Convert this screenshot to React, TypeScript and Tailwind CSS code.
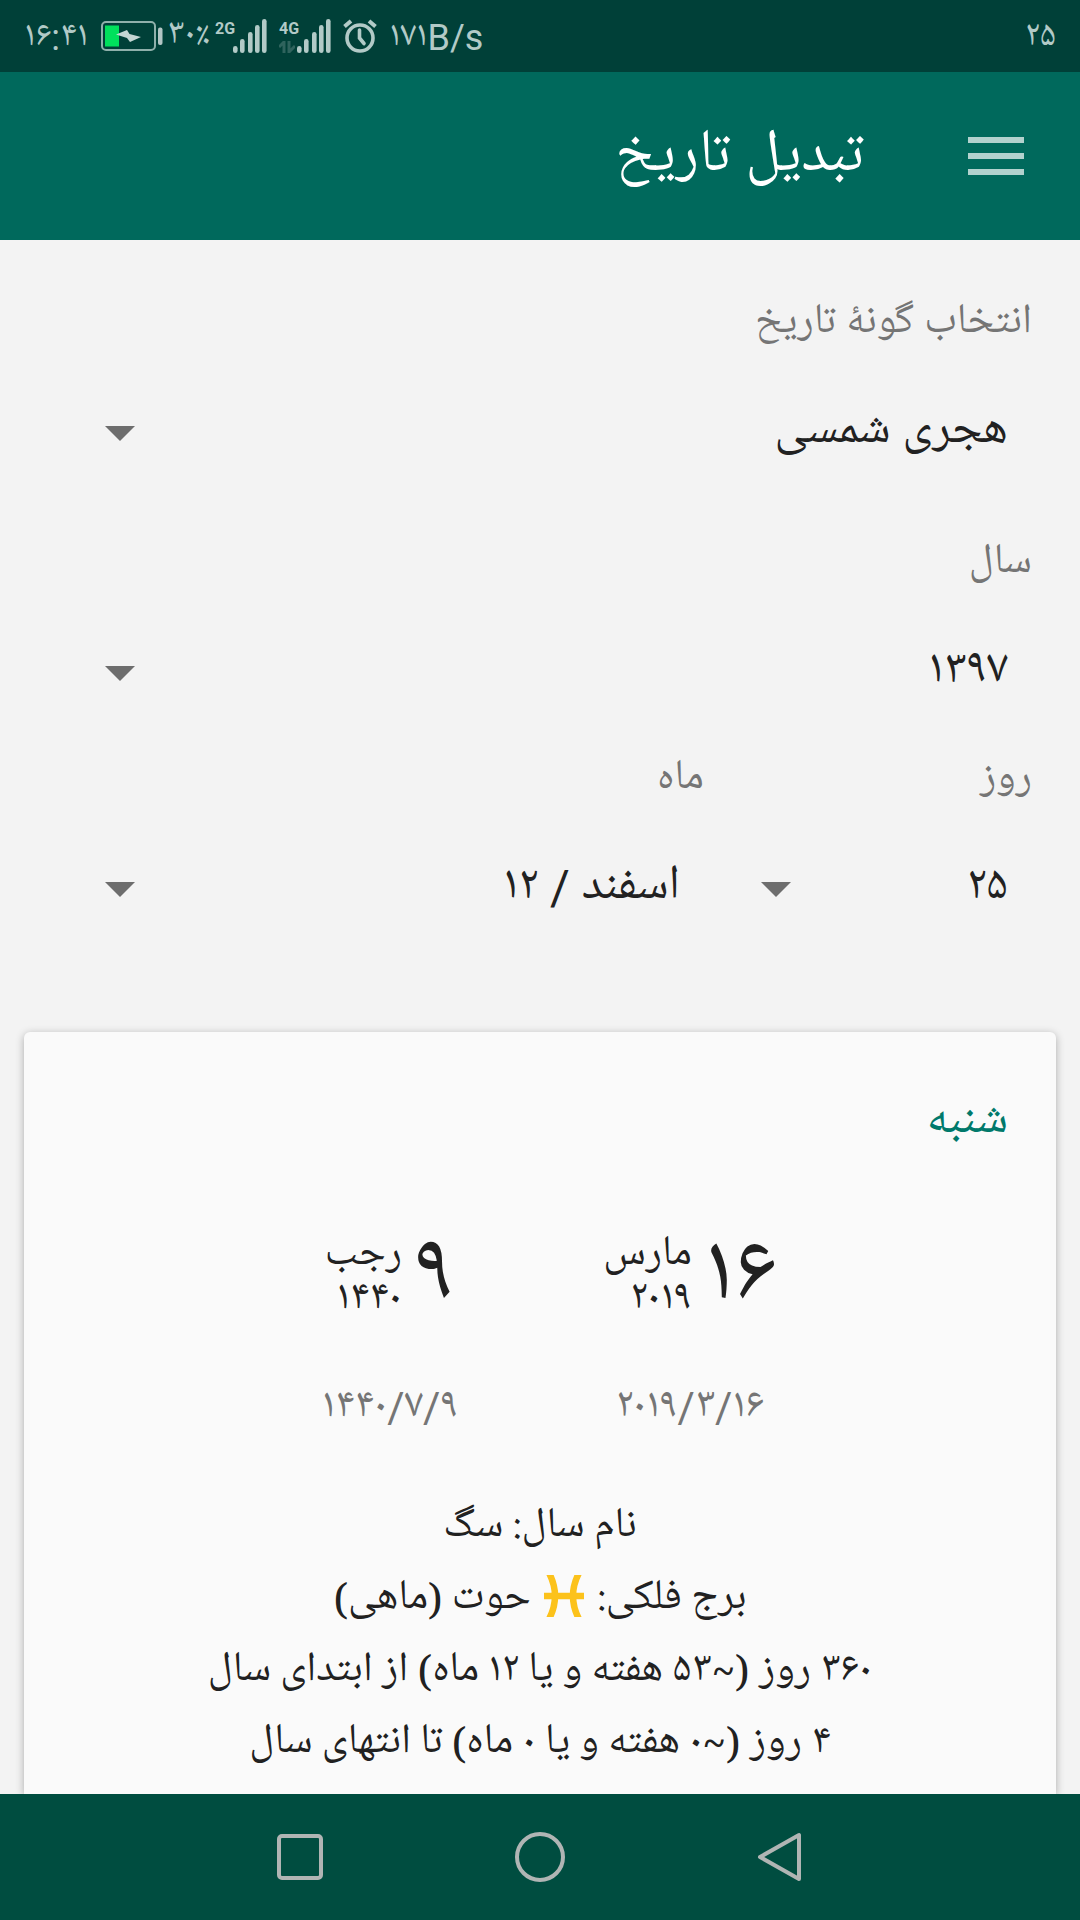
import { FC, ReactNode, useState } from "react"

const SIGNAL_BARS = [
  { x: 0, top: 27 },
  { x: 7, top: 20 },
  { x: 15, top: 13 },
  { x: 22, top: 6 },
  { x: 29, top: 0 }
]

const SignalBars: FC = () => (
  <svg width="34" height="34" viewBox="0 0 34 34" fill="currentColor" aria-hidden="true">
    {SIGNAL_BARS.map(bar => (
      <rect
        key={bar.x}
        x={bar.x}
        y={bar.top}
        width="4.600"
        height={34 - bar.top}
        rx="2.300"
      />
    ))}
  </svg>
)

const BatteryIcon: FC = () => (
  <svg width="62" height="30" viewBox="0 0 62 30" fill="none" aria-hidden="true">
    <rect x="1" y="1" width="53" height="28" rx="4" stroke="#8fb0ab" strokeWidth="2" />
    <rect x="4" y="4.500" width="14" height="21" fill="#00e05c" />
    <path d="M15 13.500 26 9l2.500 4L40 16l-11 5-3-4z" fill="#c4d6d3" />
    <rect x="57" y="6.500" width="4.500" height="17.500" rx="2" fill="#b2c5c4" />
  </svg>
)

const AlarmIcon: FC = () => (
  <svg
    width="34"
    height="34"
    viewBox="0 0 34 34"
    fill="none"
    stroke="currentColor"
    aria-hidden="true"
  >
    <circle cx="17" cy="19" r="13" strokeWidth="3.600" />
    <path d="M16.500 11v8l4.500 5.500" strokeWidth="3.600" strokeLinecap="round" />
    <path d="M1.500 7.500 8 2M32.500 7.500 26 2" strokeWidth="4" />
  </svg>
)

const DataArrowsIcon: FC = () => (
  <svg width="16" height="12" viewBox="0 0 16 12" fill="none" stroke="#2f635d" strokeWidth="3" aria-hidden="true">
    <path d="M5 12V1L0 6M10 0v11l6-6" />
  </svg>
)

const PiscesIcon: FC = () => (
  <svg
    className="mx-1 mt-2 inline-block align-middle"
    width="40"
    height="42"
    viewBox="0 0 40 42"
    fill="none"
    stroke="#fcc21b"
    strokeWidth="6.500"
    aria-label="حوت"
  >
    <path d="M4-4q14 25 0 50M36-4q-14 25 0 50M0 21h40" />
  </svg>
)

interface NetworkProps {
  label: string
  active?: boolean
}

const Network: FC<NetworkProps> = ({ label, active }) => (
  <div className="flex items-end">
    <div className="flex h-8 w-[18px] flex-col justify-between">
      <span className="text-base leading-4 font-bold">{label}</span>
      {active && <DataArrowsIcon />}
    </div>
    <SignalBars />
  </div>
)

const StatusBar: FC = () => (
  <div
    dir="ltr"
    className="flex h-[72px] shrink-0 items-center bg-[#004038] px-6 text-4xl text-[#b2cac7]"
  >
    <span className="w-[77px] pt-1">۱۶:۴۱</span>
    <BatteryIcon />
    <span className="ml-1 w-12">۳۰٪</span>
    <Network label="2G" />
    <div className="ml-3">
      <Network label="4G" active />
    </div>
    <div className="ml-3">
      <AlarmIcon />
    </div>
    <span className="ml-3 pt-1">۱۷۱B/s</span>
    <span className="ml-auto pt-1">۲۵</span>
  </div>
)

interface SpinnerProps {
  id: string
  label: string
  options: string[]
}

const Spinner: FC<SpinnerProps> = ({ id, label, options }) => {
  const [value, setValue] = useState(options[0])

  return (
    <div className="flex flex-col">
      <label htmlFor={id} className="text-[42px] leading-[72px] text-[#757575]">
        {label}
      </label>
      <div className="relative mt-6 h-24">
        <select
          id={id}
          value={value}
          onChange={e => setValue(e.target.value)}
          className="h-full w-full appearance-none bg-transparent pr-6 text-5xl leading-[96px] text-[#212121] outline-none"
        >
          {options.map(option => (
            <option key={option}>{option}</option>
          ))}
        </select>
        <svg
          className="pointer-events-none absolute top-[42px] left-[57px]"
          width="30"
          height="15"
          viewBox="0 0 30 15"
          fill="#6d6d6d"
          aria-hidden="true"
        >
          <path d="M0 0h30L15 15z" />
        </svg>
      </div>
    </div>
  )
}

interface ConvertedDateProps {
  day: string
  month: string
  year: string
  linear: string
}

const ConvertedDate: FC<ConvertedDateProps> = ({ day, month, year, linear }) => (
  <div className="flex w-75 flex-col items-center text-[42px]">
    <div className="flex h-24 items-center gap-3">
      <span className="text-8xl leading-[96px]">{day}</span>
      <div className="flex flex-col leading-[44px]">
        <span>{month}</span>
        <span>{year}</span>
      </div>
    </div>
    <span className="mt-[46px] leading-[72px] text-[#757575]">{linear}</span>
  </div>
)

const NavButton: FC<{ label: string; children: ReactNode }> = ({ label, children }) => (
  <button type="button" aria-label={label} className="flex h-full w-60 items-center justify-center">
    <svg width="50" height="50" viewBox="0 0 50 50" fill="none" stroke="#b0b5b4" strokeWidth="4" strokeLinejoin="round">
      {children}
    </svg>
  </button>
)

export default function App() {
  return (
    <div
      dir="rtl"
      lang="fa"
      className="flex h-screen flex-col overflow-hidden bg-[#f3f3f3] font-['Roboto','Noto_Naskh_Arabic_UI','Noto_Naskh_Arabic','DejaVu_Sans',sans-serif] text-[#212121]"
    >
      <StatusBar />

      <header className="flex h-[168px] shrink-0 items-center bg-[#00695c] px-14">
        <button type="button" aria-label="منو" className="flex w-14 flex-col gap-[10px]">
          <span className="h-[6px] bg-[#b2d2ce]" />
          <span className="h-[6px] bg-[#b2d2ce]" />
          <span className="h-[6px] bg-[#b2d2ce]" />
        </button>
        <h1 className="mr-26 pt-1 text-6xl text-white">تبدیل تاریخ</h1>
      </header>

      <main className="flex min-h-0 flex-1 flex-col overflow-hidden">
        <form className="flex flex-col gap-12 px-12 pt-12">
          <Spinner id="calendar" label="انتخاب گونهٔ تاریخ" options={["هجری شمسی", "هجری قمری", "میلادی"]} />
          <div className="flex flex-col gap-6">
            <Spinner id="year" label="سال" options={["۱۳۹۷", "۱۳۹۸"]} />
            <div className="grid grid-cols-[1fr_2fr]">
              <Spinner id="day" label="روز" options={["۲۵", "۲۶"]} />
              <Spinner id="month" label="ماه" options={["اسفند / ۱۲", "بهمن / ۱۱"]} />
            </div>
          </div>
        </form>

        <section className="mx-6 mt-24 flex-1 rounded-t-md bg-[#fafafa] px-12 pt-[54px] shadow-[0_2px_8px_rgba(0,0,0,0.3)]">
          <h2 className="text-5xl leading-[72px] text-[#00796b]">شنبه</h2>
          <div className="mt-18 flex justify-center">
            <ConvertedDate day="۱۶" month="مارس" year="۲۰۱۹" linear="۲۰۱۹/۳/۱۶" />
            <ConvertedDate day="۹" month="رجب" year="۱۴۴۰" linear="۱۴۴۰/۷/۹" />
          </div>
          <div className="mt-[46px] text-center font-['Noto_Naskh_Arabic_UI','Noto_Naskh_Arabic','DejaVu_Sans',sans-serif] text-[42px] leading-[72px]">
            <p>نام سال: سگ</p>
            <p>
              برج فلکی: <PiscesIcon /> حوت (ماهی)
            </p>
            <p>۳۶۰ روز (~۵۳ هفته و یا ۱۲ ماه) از ابتدای سال</p>
            <p>۴ روز (~۰ هفته و یا ۰ ماه) تا انتهای سال</p>
          </div>
        </section>
      </main>

      <nav dir="ltr" className="flex h-[126px] shrink-0 items-center justify-center bg-[#004d40]">
        <NavButton label="برنامه‌های اخیر">
          <rect x="4" y="4" width="42" height="42" rx="3" />
        </NavButton>
        <NavButton label="خانه">
          <circle cx="25" cy="25" r="23" />
        </NavButton>
        <NavButton label="بازگشت">
          <path d="M44 3v44L5 25z" />
        </NavButton>
      </nav>
    </div>
  )
}
